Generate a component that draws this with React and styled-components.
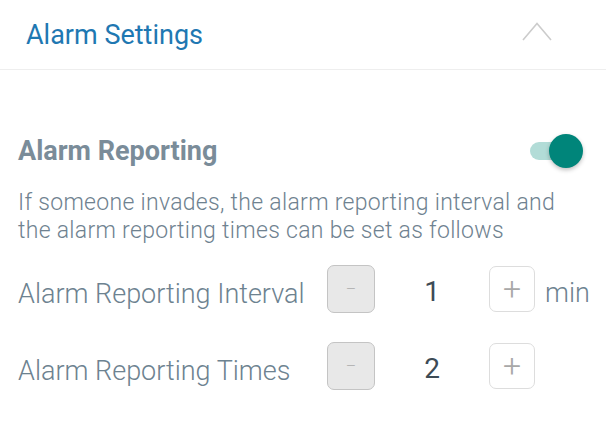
import styled, { createGlobalStyle } from "styled-components";

const GlobalStyle = createGlobalStyle`
  body {
    margin: 0;
    background: #fff;
    font-family: Roboto, "Liberation Sans", sans-serif;
  }
`;

const Panel = styled.div`
  width: 606px;
  height: 429px;
  background: #fff;
  overflow: hidden;
`;

const Header = styled.div`
  height: 70px;
  box-sizing: border-box;
  display: flex;
  align-items: center;
  justify-content: space-between;
  padding: 0 54px 0 26px;
  border-bottom: 1px solid #eeeeee;
`;

const Title = styled.div`
  font-size: 27px;
  color: #1f78b2;
`;

const Section = styled.div`
  padding: 64px 23px 0 18px;
`;

const SwitchRow = styled.div`
  display: flex;
  align-items: center;
  justify-content: space-between;
  height: 34px;
`;

const SubTitle = styled.div`
  font-size: 27px;
  font-weight: 700;
  color: #7a8c99;
`;

const Track = styled.div`
  position: relative;
  width: 44px;
  height: 18px;
  border-radius: 9px;
  background: ${(props) => (props.on ? "#b2dcd7" : "#ccc")};
  margin-right: 9px;
`;

const Thumb = styled.div`
  position: absolute;
  top: -8px;
  right: -9px;
  width: 34px;
  height: 34px;
  border-radius: 50%;
  background: ${(props) => (props.on ? "#00857a" : "#f5f5f5")};
  box-shadow: 0 2px 4px rgba(0, 0, 0, 0.25);
`;

const Description = styled.p`
  margin: 21px 0 0;
  font-size: 23px;
  letter-spacing: 0.3px;
  line-height: 28px;
  color: #6f8290;
  font-weight: 300;
`;

const Counters = styled.div`
  display: grid;
  grid-template-columns: 309px 48px 114px 46px auto;
  grid-auto-rows: 48px;
  row-gap: 29px;
  align-items: center;
  margin-top: 20px;
`;

const Label = styled.div`
  font-size: 27px;
  color: #6d8290;
  font-weight: 300;
  padding-top: 9px;
`;

const StepButton = styled.div`
  box-sizing: border-box;
  width: ${(props) => (props.minus ? "48px" : "46px")};
  height: ${(props) => (props.minus ? "48px" : "46px")};
  border-radius: 7px;
  border: 1px solid ${(props) => (props.minus ? "#c4c4c4" : "#dddddd")};
  background: ${(props) => (props.minus ? "#e8e8e8" : "#fff")};
  color: ${(props) => (props.minus ? "#b0b0b0" : "#a8a8a8")};
  display: flex;
  align-items: center;
  justify-content: center;
  font-size: ${(props) => (props.minus ? "16px" : "32px")};
  font-weight: 300;
`;

const Value = styled.div`
  text-align: center;
  font-size: 28px;
  color: #3d4b55;
  padding-top: 5px;
`;

const Unit = styled.div`
  font-size: 27px;
  color: #6d8290;
  font-weight: 300;
  margin-left: 10px;
  padding-top: 7px;
`;

const ChevronIcon = styled.svg`
  margin-bottom: 6px;
`;

const Chevron = () => (
  <ChevronIcon width="30" height="19" viewBox="0 0 30 19">
    <path d="M1 18 L15 1.5 L29 18" fill="none" stroke="#cccccc" strokeWidth="1.6" />
  </ChevronIcon>
);

const counters = [
  { label: "Alarm Reporting Interval", value: 1, unit: "min" },
  { label: "Alarm Reporting Times", value: 2, unit: "" },
];

const App = () => {
  return (
    <Panel>
      <GlobalStyle />
      <Header>
        <Title>Alarm Settings</Title>
        <Chevron />
      </Header>
      <Section>
        <SwitchRow>
          <SubTitle>Alarm Reporting</SubTitle>
          <Track on>
            <Thumb on />
          </Track>
        </SwitchRow>
        <Description>
          If someone invades, the alarm reporting interval and the alarm reporting times can be set as follows
        </Description>
        <Counters>
          {counters.map((c) => (
            <>
              <Label key={c.label}>{c.label}</Label>
              <StepButton minus>–</StepButton>
              <Value>{c.value}</Value>
              <StepButton>+</StepButton>
              <Unit>{c.unit}</Unit>
            </>
          ))}
        </Counters>
      </Section>
    </Panel>
  );
};

export default App;
